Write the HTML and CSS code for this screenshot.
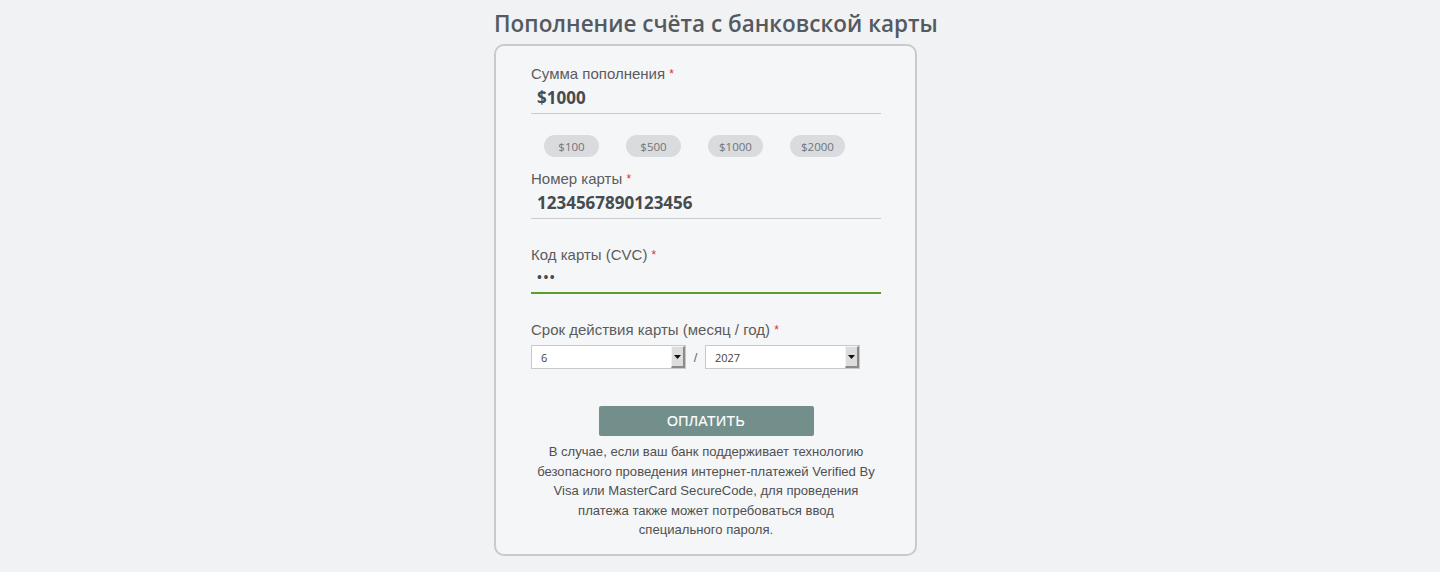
FILE: index.html
```html
<!DOCTYPE html>
<html lang="ru">
<head>
    <meta charset="UTF-8">
    <meta name="viewport" content="width=device-width, initial-scale=1.0">
    <title>Пополнение счёта</title>
    <link rel="stylesheet" href="styles.css">
</head>
<body>
    <div class="page">
        <h1 class="title">Пополнение счёта с банковской карты</h1>

        <form class="card" onsubmit="return false">
            <div class="field">
                <label class="label" for="amount">Сумма пополнения <span class="req">*</span></label>
                <input type="text" id="amount" class="input" value="$1000">
            </div>

            <div class="chips">
                <button type="button" class="chip" onclick="setAmount('$100')">$100</button>
                <button type="button" class="chip" onclick="setAmount('$500')">$500</button>
                <button type="button" class="chip" onclick="setAmount('$1000')">$1000</button>
                <button type="button" class="chip" onclick="setAmount('$2000')">$2000</button>
            </div>

            <div class="field field-card">
                <label class="label" for="cardNumber">Номер карты <span class="req">*</span></label>
                <input type="text" id="cardNumber" class="input" value="1234567890123456">
            </div>

            <div class="field field-gap">
                <label class="label" for="cvc">Код карты (CVC) <span class="req">*</span></label>
                <input type="password" id="cvc" class="input input-active" value="123">
            </div>

            <div class="field field-gap">
                <label class="label">Срок действия карты (месяц / год) <span class="req">*</span></label>
                <div class="expiry">
                    <div class="select-wrap">
                        <select class="select">
                            <option>6</option>
                        </select>
                        <span class="select-arrow">
                            <svg width="7" height="4" viewBox="0 0 7 4"><path d="M0 0h7L3.5 4z" fill="#111"/></svg>
                        </span>
                    </div>
                    <span class="slash">/</span>
                    <div class="select-wrap">
                        <select class="select">
                            <option>2027</option>
                        </select>
                        <span class="select-arrow">
                            <svg width="7" height="4" viewBox="0 0 7 4"><path d="M0 0h7L3.5 4z" fill="#111"/></svg>
                        </span>
                    </div>
                </div>
            </div>

            <button type="submit" class="pay">ОПЛАТИТЬ</button>

            <p class="note">
                В случае, если ваш банк поддерживает технологию<br>
                безопасного проведения интернет-платежей Verified By<br>
                Visa или MasterCard SecureCode, для проведения<br>
                платежа также может потребоваться ввод<br>
                специального пароля.
            </p>
        </form>
    </div>

    <script>
        function setAmount(value) {
            document.getElementById('amount').value = value;
        }
    </script>
</body>
</html>
```

FILE: styles.css
```css
body {
    margin: 0;
    background-color: #f1f2f4;
    font-family: "Liberation Sans", Arial, sans-serif;
    color: #555;
}

.page {
    width: 452px;
    margin: 0 auto;
    display: flex;
    flex-direction: column;
    align-items: flex-start;
}

.title {
    margin: 9px 0 5px 0;
    font-family: "Open Sans", sans-serif;
    font-size: 22.5px;
    font-weight: 600;
    line-height: 30px;
    color: #545a60;
    white-space: nowrap;
}

.card {
    width: 350px;
    padding: 19px 34px 14px 35px;
    background-color: #f5f6f8;
    border: 2px solid #c8cacd;
    border-radius: 10px;
    display: flex;
    flex-direction: column;
}

.field {
    display: flex;
    flex-direction: column;
}

.field-card {
    margin-top: 13px;
}

.field-gap {
    margin-top: 27px;
}

.label {
    font-size: 15px;
    line-height: 18px;
    color: #5c5c5c;
}

.req {
    color: #e0302a;
    font-size: 12px;
    vertical-align: top;
}

.input {
    height: 31px;
    box-sizing: border-box;
    margin: 0;
    padding: 0 6px 2px 6px;
    border: none;
    border-bottom: 1px solid #c9cacc;
    background: transparent;
    font-family: "Open Sans", sans-serif;
    font-size: 17px;
    font-weight: 700;
    color: #464b50;
    outline: none;
}

.input-active {
    height: 30px;
    border-bottom: 2px solid #5b9e2e;
    letter-spacing: 1.5px;
    font-size: 13px;
}

.chips {
    display: flex;
    gap: 27px;
    margin-top: 21px;
    margin-left: 13px;
}

.chip {
    width: 55px;
    height: 22px;
    padding: 0;
    border: none;
    border-radius: 11px;
    background-color: #d9dbde;
    font-family: "Open Sans", sans-serif;
    font-size: 11.5px;
    color: #707478;
    cursor: pointer;
}

.expiry {
    display: flex;
    align-items: center;
    margin-top: 6px;
}

.select-wrap {
    position: relative;
    width: 155px;
    height: 24px;
}

.select {
    width: 100%;
    height: 100%;
    margin: 0;
    padding: 0 0 0 9px;
    box-sizing: border-box;
    appearance: none;
    -webkit-appearance: none;
    border: 1px solid #c9c9c9;
    border-radius: 0;
    background-color: #fff;
    font-family: "Open Sans", sans-serif;
    font-size: 11px;
    color: #444;
    outline: none;
}

/* fake scroll-arrow box like old browsers */
.select-arrow {
    position: absolute;
    top: 1px;
    right: 1px;
    width: 14px;
    height: 22px;
    box-sizing: border-box;
    display: flex;
    align-items: center;
    justify-content: center;
    background-color: #dddddd;
    border-top: 1px solid #f4f4f4;
    border-left: 1px solid #f4f4f4;
    border-right: 2px solid #8a8a8a;
    border-bottom: 2px solid #8a8a8a;
}

.slash {
    width: 19px;
    text-align: center;
    font-size: 13px;
    color: #666;
}

.pay {
    align-self: center;
    width: 215px;
    height: 30px;
    margin-top: 37px;
    border: none;
    border-radius: 2px;
    background-color: #728f8b;
    color: #fff;
    font-family: "Liberation Sans", Arial, sans-serif;
    font-size: 14px;
    font-weight: 400;
    -webkit-text-stroke: 0.15px #fff;
    letter-spacing: 0.4px;
    cursor: pointer;
}

.note {
    margin: 6px 0 0 0;
    text-align: center;
    font-size: 13.1px;
    line-height: 19.5px;
    color: #505050;
    white-space: nowrap;
}
```
